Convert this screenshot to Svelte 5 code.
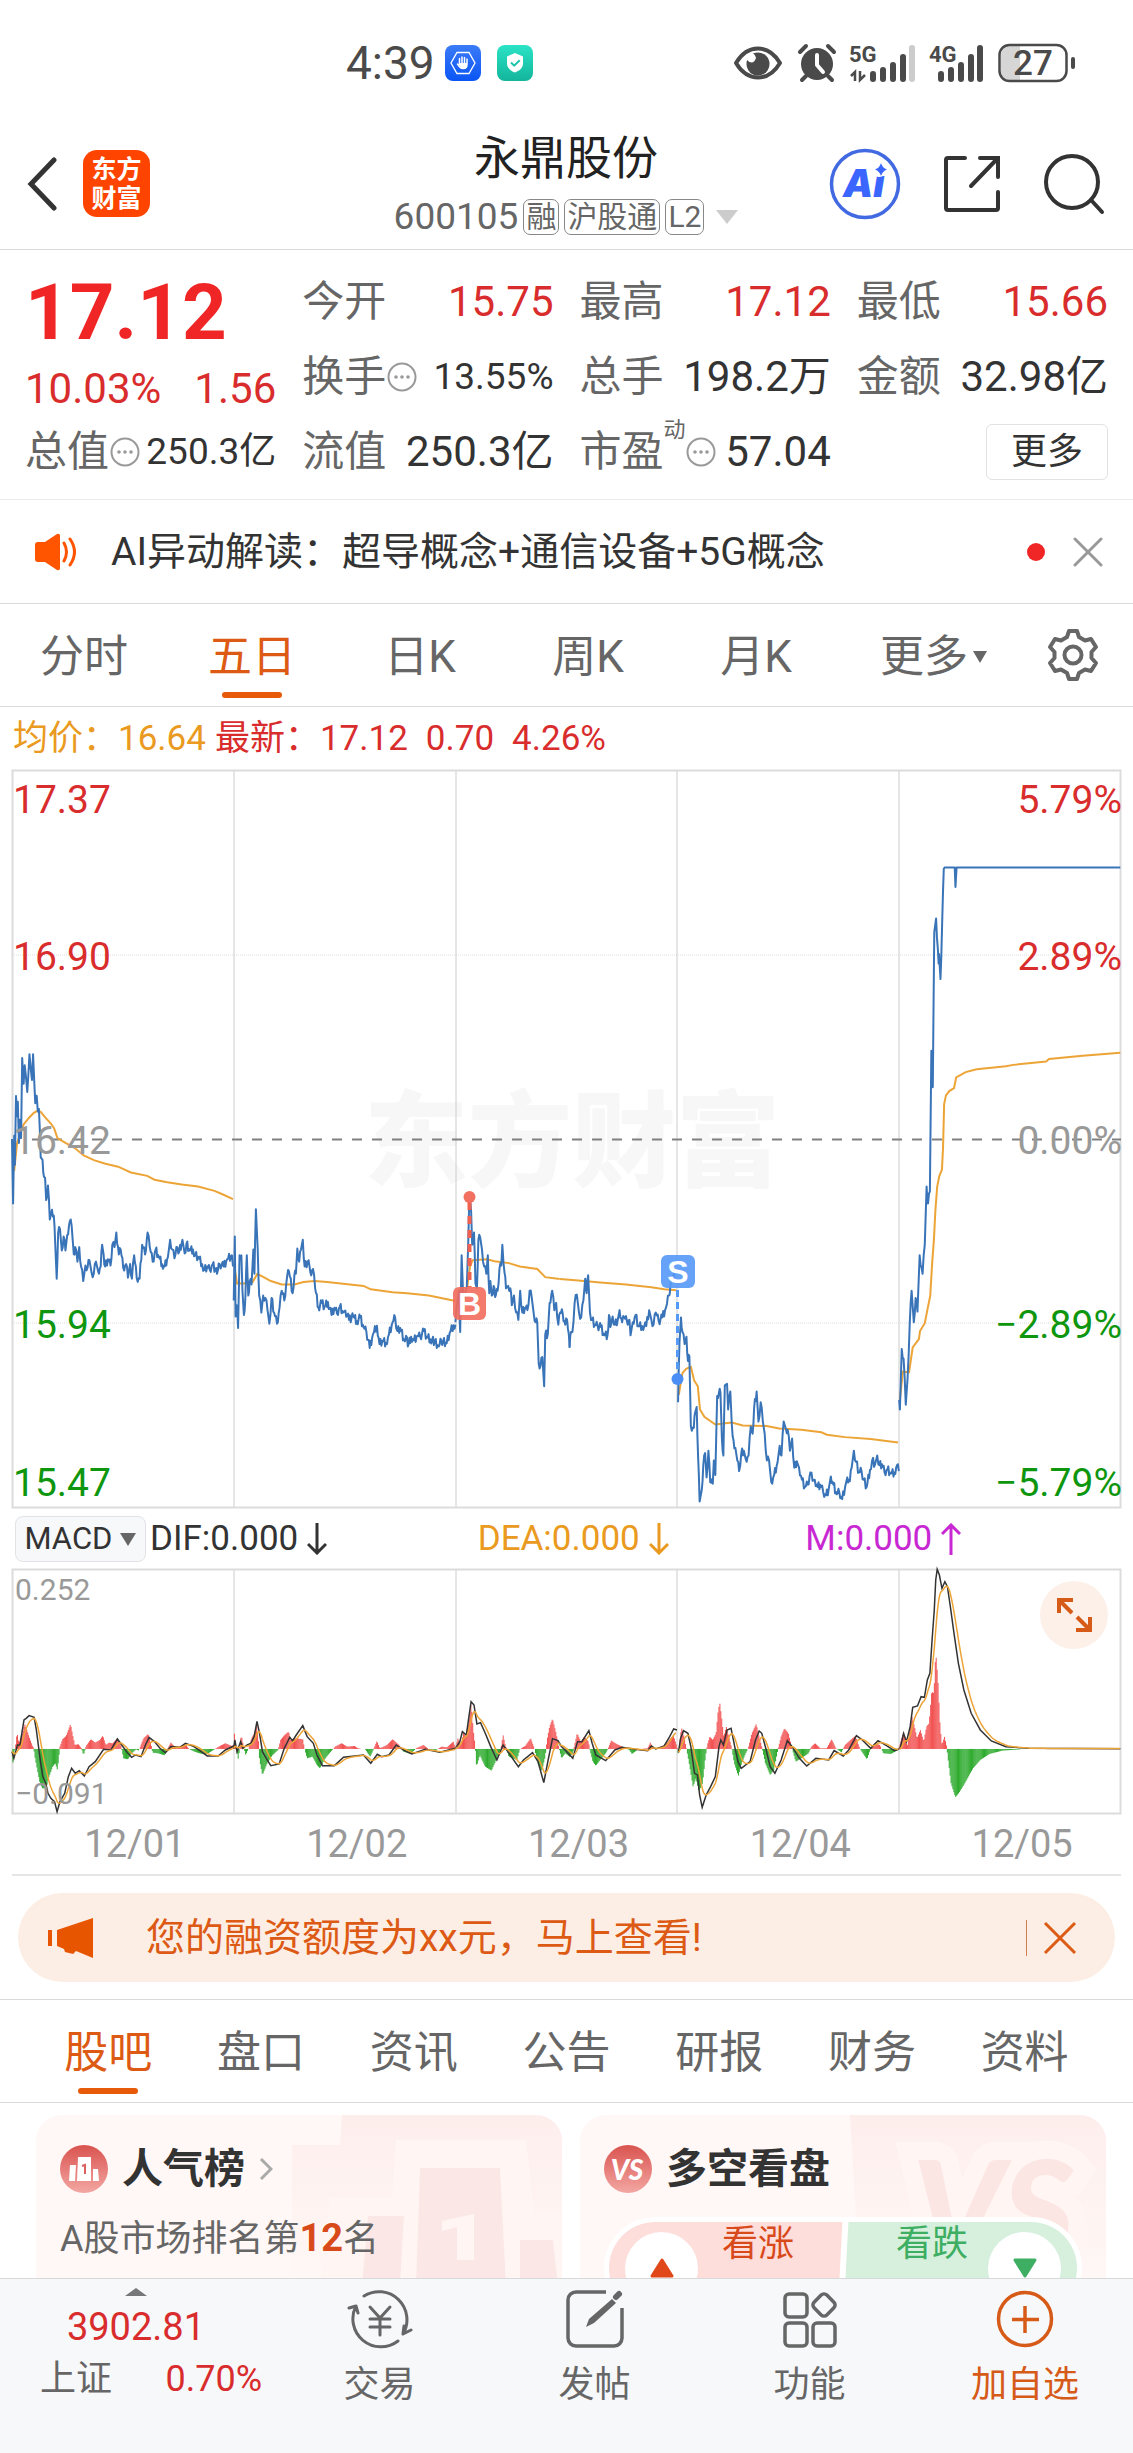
<script lang="ts">
	type Point = [number, number];

	const periods = ['分时', '五日', '日K', '周K', '月K'];
	const sections = ['股吧', '盘口', '资讯', '公告', '研报', '财务', '资料'];
	const dates = ['12/01', '12/02', '12/03', '12/04', '12/05'];
	const gridX = [222, 444, 665, 887];

	let period = $state('五日');
	let section = $state('股吧');

	const priceLabels = [
		{ y: 43, price: '17.37', pct: '5.79%', tone: 'up' },
		{ y: 200, price: '16.90', pct: '2.89%', tone: 'up' },
		{ y: 384, price: '16.42', pct: '0.00%', tone: 'flat' },
		{ y: 568, price: '15.94', pct: '−2.89%', tone: 'down' },
		{ y: 726, price: '15.47', pct: '−5.79%', tone: 'down' }
	];

	const indicators = [
		{ text: 'DIF:0.000', up: false, cls: 'dif' },
		{ text: 'DEA:0.000', up: false, cls: 'dea' },
		{ text: 'M:0.000', up: true, cls: 'macd' }
	];

	// one minute on the x axis and one 0.01 tick on the y axis, in series units
	const MINUTE = 2.54;
	const TICK = 8;

	const parse = (s: string): Point[] => s.trim().split(/\s+/).map((p) => p.split(',').map(Number) as Point);

	function sample(points: Point[], step = MINUTE): Point[] {
		const out: Point[] = [];
		let i = 0;
		for (let x = points[0][0]; x <= points[points.length - 1][0]; x += step) {
			while (i < points.length - 2 && points[i + 1][0] < x) i++;
			const [x0, y0] = points[i];
			const [x1, y1] = points[i + 1];
			out.push([x, y0 + ((y1 - y0) * (x - x0)) / (x1 - x0)]);
		}
		return out;
	}

	// turning points, with tick-sized noise on the minutes between them
	function pricePath(s: string): string {
		const pts = parse(s);
		const out: Point[] = [pts[0]];
		for (let i = 1; i < pts.length; i++) {
			const [x0, y0] = pts[i - 1];
			const [x1, y1] = pts[i];
			const n = Math.round((x1 - x0) / MINUTE);
			if (n < 8) {
				for (let k = 1; k < n; k++) {
					const noise = (((i * 7 + k * 5) % 3) - 1) * TICK;
					out.push([x0 + ((x1 - x0) * k) / n, y0 + ((y1 - y0) * k) / n + noise]);
				}
			}
			out.push([x1, y1]);
		}
		return line(out);
	}

	function line(pts: Point[]): string {
		return 'M' + pts.map(([x, y]) => `${x.toFixed(1)},${y.toFixed(1)}`).join('L');
	}

	function smoothed(s: string): string {
		let ema = NaN;
		return line(sample(parse(s)).map(([x, y]) => {
			ema = Number.isNaN(ema) ? y : ema + (y - ema) * 0.2;
			return [x, ema];
		}));
	}

	function bars(s: string, positive: boolean): string {
		return sample(parse(s))
			.filter(([, y]) => (positive ? y < 746 : y > 748))
			.map(([x, y]) => `M${x.toFixed(1)},747V${y.toFixed(1)}`)
			.join('');
	}

	const price = [
		[
			'33,782 36,915 39,775 41,835 44,693 47,735 49,705 52,790 55,742 58,780 61,615 65,668 68,630 71,650 75,685 78,650 81,607 85,640 88,660 91,607 94,660 97,708 101,693 104,725 107,720 112,820 117,825 121,860 124,862 127,908 132,878 137,948 143,928 148,940 152,1000 156,1070 160,975 165,968 170,1012 175,983 180,1012 185,980 192,952 197,960 203,1020 207,1005 213,1035 218,1005 223,1045 229,1075 235,1043 241,1047 246,1032 252,1058 258,1060 264,1035 270,1055 277,1045 281,1000 285,1020 289,1045 297,1030 304,1043 309,1000 315,1005 320,975 327,1020 332,1010 339,1048 347,1040 352,1068 358,1040 363,1070 369,1022 376,1068 384,1070 391,1000 399,1020 406,975 412,1005 420,1035 428,1010 437,1025 446,1040 453,1045 462,1025 468,990 474,1010 480,1028 488,1005 493,1015 502,990 508,1018 513,998 522,1012 531,1010 537,1022 545,1025 556,1040 562,1052 570,1045 577,1052 585,1040 597,1060 604,1040 615,1045 625,1030 638,1022 641,1045',
			'643,1115 646,983 648,1148 651,1125 655,1172 659,1022 664,1022 667,1095 671,1145 675,1110 679,1022 683,1105 687,1075 692,1082 697,1010 700,1060 704,927 709,1010 713,1105 719,1140 724,1105 730,1110 736,1135 741,1163 747,1110 754,1140 762,1163 769,1130 775,1095 782,1115 790,1065 795,1055 805,1100 810,1062 814,1060 818,1008 823,1035 828,1010 833,990 838,1045 849,1032 854,1058 861,1050 867,1090 876,1130 885,1120 893,1128 902,1118 912,1145 920,1130 927,1142 935,1127 944,1140 950,1136 960,1155 972,1148 982,1158 991,1150 1000,1170 1008,1180 1017,1213 1026,1185 1037,1167 1044,1205 1052,1198 1062,1203 1070,1185 1080,1160 1087,1150 1093,1178 1101,1172 1111,1195 1117,1188 1122,1210 1131,1190 1139,1197 1148,1188 1156,1190 1166,1178 1174,1190 1184,1195 1196,1200 1207,1210 1214,1198 1229,1203 1237,1182 1248,1166 1253,1165',
			'1253,1160 1258,1120 1262,1095 1266,1180 1270,1022 1274,1100 1279,1110 1284,1090 1288,1000 1291,905 1296,930 1299,1000 1304,975 1308,1080 1312,1090 1316,990 1321,985 1326,1010 1332,1045 1338,1060 1342,1022 1346,1100 1349,1075 1353,1105 1358,1085 1362,1108 1369,1095 1374,1050 1379,1043 1382,1000 1388,1058 1392,1090 1398,1085 1404,1090 1408,1125 1414,1105 1420,1140 1426,1155 1431,1095 1437,1140 1444,1130 1451,1135 1457,1095 1463,1110 1468,1140 1474,1160 1478,1160 1482,1245 1487,1250 1492,1232 1497,1292 1500,1185 1507,1185 1512,1120 1519,1095 1525,1135 1530,1120 1536,1165 1541,1140 1548,1142 1555,1165 1560,1155 1567,1210'
		],
		[
			'26,1213 30,1180 34,1180 40,1120 46,1103 52,1140 58,1150 64,1115 69,1070 73,1100 77,1063 82,1140 88,1155 95,1165 103,1168 112,1170 121,1187 130,1187 134,1145 138,1170 144,1148 150,1165 158,1155 163,1135 170,1160 176,1150 183,1158 190,1155 193,1187 199,1160 207,1145 214,1168 225,1168 236,1168 244,1135 250,1155 256,1165 262,1140 270,1158 280,1150 290,1130 298,1105 302,1085 307,1065 314,1068',
			'323,1325 327,1200 331,1150 335,1180 341,1205 346,1190 350,1240 354,1230 358,1375 366,1378 370,1345 374,1335 378,1440 382,1530 388,1505 392,1455 397,1430 401,1480 406,1425 411,1490 418,1493 421,1445 425,1475 430,1312 435,1305 439,1305 443,1400 447,1435 451,1290 457,1287 460,1340 466,1303 470,1370 477,1420 483,1435 490,1467 496,1430 503,1425 508,1442 516,1435 522,1375 527,1390 531,1338 538,1303 543,1365 549,1325 555,1365 560,1390 566,1445 572,1445 578,1490 586,1475 595,1450 601,1415 606,1435 612,1365 618,1380 623,1382 629,1425 635,1400 641,1460 648,1447 654,1460 662,1485 670,1500 678,1495 685,1470 691,1487 697,1485 705,1500 712,1495 720,1510 728,1517 735,1505 741,1478 748,1495 757,1515 764,1510 772,1525 780,1500 786,1480 793,1488 798,1460 804,1425 810,1448 818,1470 825,1467 831,1485 839,1500 848,1465 854,1445 862,1453 868,1435 874,1455 881,1453 888,1470 896,1463 905,1472 915,1470 922,1455 927,1467',
			'928,1320 930,1340 935,1215 940,1235 946,1330 951,1275 957,1160 962,1095 968,1160 973,1110 978,1138 984,1022 992,1060 998,1000 1003,880 1007,915 1012,890 1016,600 1020,675 1024,355 1029,327 1036,420 1037,400 1041,452 1050,225 1052,222 1080,222 1082,262 1085,222 1533,222'
		]
	];

	const average = [
		[
			'39,848 47,790 56,770 65,752 80,738 93,728 103,724 112,726 125,738 140,750 149,760 158,780 180,790 205,800 230,816 260,826 290,833 325,839 360,851 405,858 425,866 460,871 500,876 545,880 590,889 615,897 641,906',
			'645,1045 652,1080 670,1080 695,1077 708,1060 725,1067 745,1075 775,1082 810,1082 835,1077 865,1075 900,1077 1000,1085 1020,1092 1080,1098 1120,1100 1180,1105 1253,1116',
			'1285,1090 1293,1045 1300,1032 1340,1030 1360,1034 1400,1038 1430,1045 1478,1050 1500,1067 1540,1071'
		],
		[
			'0,1071 50,1074 110,1078 180,1082 250,1088 285,1092 318,1094',
			'325,1310 335,1265 345,1256 358,1252 367,1280 377,1292 383,1340 395,1355 425,1371 470,1367 500,1373 565,1374 600,1379 660,1382 715,1387 730,1392 780,1397 850,1401 925,1408',
			'930,1320 938,1262 955,1263 965,1212 982,1195 985,1178 998,1162 1005,1135 1013,1105 1018,1040 1023,990 1027,930 1032,880 1038,858 1045,845 1048,800 1051,710 1056,692 1065,683 1078,677 1084,655 1110,644 1140,638 1220,632 1240,629 1330,622 1338,617 1430,610 1533,604'
		]
	];

	const dif = [
		[
			'33,755 38,775 42,760 48,735 55,735 60,700 66,660 72,655 80,647 94,652 100,690 106,740 112,790 118,830 126,850 132,880 140,895 150,905 157,935 165,905 178,880 188,830 197,805 207,820 218,812 232,828 245,800 262,785 285,748 305,750 323,717 335,735 348,755 362,772 373,765 388,770 400,735 410,712 425,725 440,745 455,758 470,740 495,742 510,730 530,738 545,748 570,768 600,768 620,750 643,738',
			'643,745 646,720 652,755 662,725 668,745 680,735 690,730 699,710 707,664 714,700 722,755 735,780 745,797 768,792 782,745 797,712 805,722 815,705 833,677 845,710 862,730 872,765 887,797 920,797 945,772 1000,765 1020,790 1038,763 1050,770 1070,765 1090,735 1110,750 1133,762 1170,748 1210,757 1253,745',
			'1253,745 1265,725 1272,695 1283,705 1290,650 1296,605 1304,615 1312,672 1322,668 1335,700 1350,740 1367,780 1384,735 1395,752 1426,800 1440,780 1465,758 1480,785 1496,848 1508,780 1520,716 1535,722 1542,735'
		],
		[
			'0,735 18,755 35,775 48,725 60,725 79,692 88,730 98,765 125,782 150,750 170,742 205,748 240,752 250,738 262,747 285,738 300,710 311,687 320,690',
			'324,757 330,715 338,692 350,700 358,740 368,820 376,825 382,885 389,922 400,885 412,860 425,830 435,740 440,720 447,735 457,690 468,685 478,740 487,785 496,805 520,785 535,720 545,693 552,700 563,745 575,800 588,820 605,780 622,722 635,740 655,775 675,798 700,775 735,780 750,752 775,768 790,750 811,707 825,718 850,745 870,722 890,735 915,752 928,747',
			'930,747 940,700 948,725 958,680 965,622 978,618 988,590 997,592 1005,540 1012,520 1018,420 1024,330 1028,240 1032,208 1038,225 1045,265 1053,245 1060,260 1068,320 1078,400 1090,490 1105,570 1125,640 1150,690 1180,723 1220,740 1280,745 1533,746'
		]
	];

	const histogram = [
		'33,747 36,795 40,755 43,735 47,697 52,730 56,715 62,700 68,672 74,690 80,710 88,735 93,745 95,765 102,805 110,850 117,865 127,865 135,830 145,800 152,790 158,810 162,770 165,740 172,718 182,708 188,690 194,672 200,705 206,735 216,733 224,745 230,765 237,738 250,718 262,728 275,720 283,707 291,735 300,728 310,730 323,715 333,738 340,775 352,778 362,760 375,748 382,752 388,735 395,715 408,702 416,735 420,758 435,760 453,766 462,745 470,728 485,745 497,738 510,733 520,747 535,755 555,762 570,762 590,748 605,738 620,730 638,738 643,735 645,700 650,745 656,780 660,735 664,705 670,740 676,765 684,745 692,715 700,700 706,672 711,720 714,780 722,825 735,790 750,765 765,750 772,720 783,705 794,695 800,720 815,715 833,718 838,747 845,775 860,770 872,795 880,805 895,775 910,755 922,740 940,730 955,740 975,738 985,745 1005,748 1018,770 1025,755 1037,723 1045,745 1065,735 1080,718 1098,735 1110,755 1130,762 1145,745 1165,735 1180,748 1200,750 1215,740 1230,742 1247,725 1253,745 1260,715 1268,735 1275,700 1282,710 1290,660 1296,610 1302,690 1307,735 1311,800 1320,765 1335,800 1352,812 1365,780 1378,745 1384,705 1390,735 1400,770 1422,780 1430,748 1445,738 1460,715 1470,745 1480,790 1490,815 1500,770 1505,720 1512,680 1520,656 1530,700 1538,745 1545,775 1555,760 1567,770',
		'26,770 35,760 40,735 47,700 57,725 66,710 78,725 82,750 90,785 98,797 110,780 125,760 132,745 140,722 155,732 170,740 190,750 197,762 215,747 240,745 247,728 255,745 275,745 295,725 310,705 320,740 324,765 330,700 334,683 340,715 346,745 355,800 364,860 372,835 380,875 390,850 398,770 403,735 410,710 418,720 427,700 432,640 437,607 443,660 448,710 455,680 463,715 470,745 477,790 488,828 497,790 508,760 515,745 525,700 537,672 545,710 552,740 562,790 575,825 585,810 597,745 605,710 614,685 625,700 635,745 645,785 660,775 680,760 688,740 698,730 712,745 730,745 743,718 755,745 770,757 780,735 795,720 808,708 820,745 840,778 850,745 862,730 875,735 885,760 905,762 925,750 930,735 940,695 950,740 955,700 963,650 970,680 977,715 986,690 995,725 1003,680 1010,670 1017,575 1023,580 1028,455 1034,540 1040,680 1045,735 1052,710 1058,740 1061,770 1070,850 1082,892 1092,878 1110,845 1130,805 1150,780 1175,762 1210,752 1260,748 1533,747'
	];

	const priceHalves = ['translate(-12 -10) scale(.3635 .4847)', 'translate(548 -10) scale(.3655 .4847)'];
	const macdHalves = ['translate(-12 -69) scale(.3635 .3333)', 'translate(548 -69) scale(.3655 .3333)'];
</script>

{#snippet more()}
	<svg class="hint" viewBox="0 0 30 30" aria-hidden="true">
		<circle cx="15" cy="15" r="13.5" fill="none" stroke="#999" stroke-width="2" />
		<circle cx="9" cy="15" r="1.8" fill="#999" /><circle cx="15" cy="15" r="1.8" fill="#999" /><circle cx="21" cy="15" r="1.8" fill="#999" />
	</svg>
{/snippet}

<div class="app">
	<div class="status">
		<div class="status-left">
			<span class="clock">4:39</span>
			<svg width="36" height="36" viewBox="0 0 36 36">
				<defs><linearGradient id="blue" x2="0" y2="1"><stop stop-color="#3b7bf6" /><stop offset="1" stop-color="#0a55f5" /></linearGradient></defs>
				<rect width="36" height="36" rx="8" fill="url(#blue)" />
				<path d="M12 7.500h12l6 10.500-6 10.500H12L6 18z" fill="none" stroke="#fff" stroke-width="1.300" />
				<path d="M14.500 13.500v6M17 12v7M19.500 12.500v7M22 14v6M22 19.500c0 3-1.500 4-4 4s-3.500-1.500-5.500-4.500" fill="none" stroke="#fff" stroke-width="1.500" stroke-linecap="round" />
				<path d="M14 18h8v4l-2 2h-4z" fill="#fff" />
			</svg>
			<svg class="shield" width="36" height="36" viewBox="0 0 36 36">
				<defs><linearGradient id="teal" x2="0" y2="1"><stop stop-color="#2be3c6" /><stop offset="1" stop-color="#13b59b" /></linearGradient></defs>
				<rect width="36" height="36" rx="8" fill="url(#teal)" />
				<path d="M18 8l8 3.500v7c0 4.500-4 7.500-8 9-4-1.500-8-4.500-8-9v-7z" fill="#fff" />
				<path d="M14 17.500l3.200 3.200 5.500-5.500" fill="none" stroke="#1fc5aa" stroke-width="2" />
			</svg>
		</div>
		<div class="status-right">
			<svg width="48" height="36" viewBox="0 0 48 36">
				<path d="M2 18C8 8 16 3.500 24 3.500S40 8 46 18C40 28 32 32.500 24 32.500S8 28 2 18z" fill="none" stroke="#4a4a4a" stroke-width="4" stroke-linejoin="round" />
				<circle cx="24" cy="19" r="11.500" fill="#4a4a4a" /><path d="M13 15q6 6 9-2-1-4-4-5l-6 4z" fill="#fff" />
			</svg>
			<svg class="alarm" width="38" height="38" viewBox="0 0 38 38">
				<circle cx="19" cy="20" r="16" fill="#4a4a4a" />
				<path d="M2 8l6-6M36 8l-6-6M8 32l-4 4M30 32l4 4" stroke="#4a4a4a" stroke-width="4" stroke-linecap="round" />
				<path d="M19 11v10l6 7" fill="none" stroke="#fff" stroke-width="4" stroke-linecap="round" stroke-linejoin="round" />
			</svg>
			<svg width="66" height="38" viewBox="0 0 66 38">
				<text x="-1" y="18" class="net">5G</text>
				<path d="M5 37V28l-4 4M10 27v9l5-5" fill="none" stroke="#4a4a4a" stroke-width="2.500" />
				<path d="M23 30v5M33 26v9M43 21v14M53 13v22" stroke="#4a4a4a" stroke-width="6" stroke-linecap="round" />
				<path d="M62 4v31" stroke="#ccc" stroke-width="6" stroke-linecap="round" />
			</svg>
			<svg class="sim" width="54" height="38" viewBox="0 0 54 38">
				<text x="-1" y="18" class="net">4G</text>
				<path d="M11 30v5M21 26v9M31 21v14M41 13v22M50 4v31" stroke="#4a4a4a" stroke-width="6" stroke-linecap="round" />
			</svg>
			<svg class="battery" width="78" height="40" viewBox="0 0 78 40">
				<path d="M3 12a9 9 0 0 1 9-9h10v34H12a9 9 0 0 1-9-9z" fill="#d6d6d6" />
				<rect x="1.500" y="2" width="67" height="36" rx="10" fill="none" stroke="#4a4a4a" stroke-width="2.500" />
				<path d="M75 16v8" stroke="#4a4a4a" stroke-width="4" stroke-linecap="round" />
				<text x="35" y="32" class="charge">27</text>
			</svg>
		</div>
	</div>

	<header>
		<div class="head-left">
			<button class="icon" aria-label="返回">
				<svg width="30" height="54" viewBox="0 0 30 54"><path d="M27 3L4 27l23 24" fill="none" stroke="#333" stroke-width="5" stroke-linecap="round" /></svg>
			</button>
			<a class="logo" href="#home"><span>东方</span><span>财富</span></a>
		</div>
		<div class="title">
			<h1>永鼎股份</h1>
			<div class="code">
				<span>600105</span>
				<span class="tag">融</span><span class="tag">沪股通</span><span class="tag">L2</span>
				<svg width="22" height="14" viewBox="0 0 22 14"><path d="M0 0h22L11 14z" fill="#ccc" /></svg>
			</div>
		</div>
		<div class="head-right">
			<button class="icon" aria-label="AI">
				<svg width="72" height="72" viewBox="0 0 72 72">
					<circle cx="36" cy="36" r="33.500" fill="none" stroke="#4169e1" stroke-width="3.500" />
					<text x="14" y="49" class="ai">Ai</text>
					<circle cx="50" cy="21" r="8" fill="#fff" />
					<path d="M52 15q1.500 5 6 6.500-4.500 1.500-6 6.500-1.500-5-6-6.500 4.500-1.500 6-6.500z" fill="#3a66ff" />
				</svg>
			</button>
			<button class="icon" aria-label="分享">
				<svg width="58" height="58" viewBox="0 0 58 58" fill="none" stroke="#333" stroke-width="4" stroke-linecap="round">
					<path d="M22 3H5a2 2 0 0 0-2 2v48a2 2 0 0 0 2 2h48a2 2 0 0 0 2-2V37M37 3h18v19M54 4L28 31" />
				</svg>
			</button>
			<button class="icon" aria-label="搜索">
				<svg width="62" height="62" viewBox="0 0 62 62" fill="none" stroke="#333" stroke-width="4" stroke-linecap="round"><circle cx="29" cy="29" r="26" /><path d="M48 47l11 12" /></svg>
			</button>
		</div>
	</header>

	<main>
		<section class="quote">
			<div class="last">
				<strong>17.12</strong>
				<div class="change"><span>10.03%</span><span>1.56</span></div>
			</div>
			<div class="cell"><span>今开</span><b class="up">15.75</b></div>
			<div class="cell"><span>最高</span><b class="up">17.12</b></div>
			<div class="cell"><span>最低</span><b class="up">15.66</b></div>
			<div class="cell"><span>换手</span>{@render more()}<b class="small">13.55%</b></div>
			<div class="cell"><span>总手</span><b>198.2万</b></div>
			<div class="cell"><span>金额</span><b>32.98亿</b></div>
			<div class="cell"><span>总值</span>{@render more()}<b class="small">250.3亿</b></div>
			<div class="cell"><span>流值</span><b>250.3亿</b></div>
			<div class="cell"><span>市盈</span><sup>动</sup>{@render more()}<b>57.04</b></div>
			<div class="cell end"><button class="more">更多</button></div>
		</section>

		<section class="news">
			<svg width="46" height="38" viewBox="0 0 46 38">
				<path d="M2 12q0-3 3-3h7L24 1q3-1 3 2v32q0 3-3 2L12 29H5q-3 0-3-3z" fill="#ff5500" />
				<path d="M31 10q5 9 0 18M37 6q9 13 0 26" fill="none" stroke="#ff5500" stroke-width="3" stroke-linecap="round" />
			</svg>
			<a href="#news">AI异动解读：超导概念+通信设备+5G概念</a>
			<i class="dot"></i>
			<button class="icon" aria-label="关闭">
				<svg width="30" height="30" viewBox="0 0 30 30"><path d="M2 2l26 26M28 2L2 28" stroke="#999" stroke-width="3" stroke-linecap="round" /></svg>
			</button>
		</section>

		<nav class="periods">
			{#each periods as p}
				<button class="tab" class:active={p === period} onclick={() => (period = p)}>{p}</button>
			{/each}
			<button class="tab">更多<svg width="16" height="14" viewBox="0 0 16 14"><path d="M1 1h14L8 13z" fill="#666" /></svg></button>
			<button class="icon gear" aria-label="设置">
				<svg width="52" height="54" viewBox="0 0 52 54" fill="none" stroke="#666" stroke-width="4" stroke-linejoin="round">
					<path d="M22 3h8l2 6 6 3.500 6-1.500 5 8-4.500 5v6l4.500 5-5 8-6-1.500L32 45l-2 6h-8l-2-6-6-3.500L8 43l-5-8 4.500-5v-6L3 19l5-8 6 1.500L20 9z" />
					<circle cx="26" cy="27" r="8.500" />
				</svg>
			</button>
		</nav>

		<div class="legend">
			<span class="avg">均价：16.64</span>
			<span class="now"><span>最新：17.12</span><span>0.70</span><span>4.26%</span></span>
		</div>

		<section class="charts">
			<svg class="chart" viewBox="0 0 1109 738">
				<text x="560" y="409" class="watermark">东方财富</text>
				<path d="M0 185H1109M0 553H1109" stroke="#ddd" stroke-dasharray="1 1" />
				{#each gridX as x}<path d="M{x} 0V737" stroke="#ccc" />{/each}
				<rect x="0.500" y="0.500" width="1108" height="737" fill="none" stroke="#dcdcdc" stroke-width="2" />
				<path d="M20 369.500H1109" stroke="#808080" stroke-width="2" stroke-dasharray="10 10" />
				{#each priceHalves as transform, h}
					<g {transform} fill="none">
						{#each average[h] as s}<path d={line(parse(s))} stroke="#eda437" stroke-width="2" vector-effect="non-scaling-stroke" />{/each}
						{#each price[h] as s}<path d={pricePath(s)} stroke="#3a74b8" stroke-width="2" stroke-linejoin="round" vector-effect="non-scaling-stroke" />{/each}
					</g>
				{/each}
				<path d="M457.500 432V517" stroke="#f2604f" stroke-width="4" stroke-dasharray="8 6" />
				<circle cx="457.500" cy="427" r="6" fill="#f2705f" />
				<g opacity="0.9">
					<rect x="441" y="517" width="33" height="33" rx="6" fill="#f26b5c" />
					<rect x="649" y="485" width="34" height="33" rx="6" fill="#5599f7" />
				</g>
				<text x="457.500" y="545" class="badge">B</text>
				<text x="666" y="513" class="badge">S</text>
				<path d="M665.500 520V604" stroke="#5599f7" stroke-width="3" stroke-dasharray="7 5" />
				<circle cx="665.500" cy="609" r="6" fill="#4a8ef5" />
				{#each priceLabels as l}
					<text x="1" y={l.y} class="axis {l.tone}">{l.price}</text>
					<text x="1110" y={l.y} class="axis right {l.tone}">{l.pct}</text>
				{/each}
			</svg>

			<div class="indicator">
				<button class="pick">MACD<svg width="16" height="14" viewBox="0 0 16 14"><path d="M0 1h16L8 14z" fill="#666" /></svg></button>
				{#each indicators as ind}
					<span class="value {ind.cls}">{ind.text}
						<svg width="20" height="32" viewBox="0 0 20 32" fill="none" stroke="currentColor" stroke-width="3">
							<path d={ind.up ? 'M10 32V2M1 11l9-9 9 9' : 'M10 0v30M1 21l9 9 9-9'} />
						</svg>
					</span>
				{/each}
			</div>

			<svg class="chart" viewBox="0 0 1109 245">
				{#each gridX as x}<path d="M{x} 0V245" stroke="#ccc" />{/each}
				<rect x="0.500" y="0.500" width="1108" height="244" fill="none" stroke="#dcdcdc" stroke-width="2" />
				{#each macdHalves as transform, h}
					<g {transform} fill="none">
						<path d={bars(histogram[h], true)} stroke="#f03c3c" stroke-width="2.540" />
						<path d={bars(histogram[h], false)} stroke="#14a014" stroke-width="2.540" />
					</g>
					<g {transform} fill="none" stroke-width="1.500">
						{#each dif[h] as s}
							<path d={line(parse(s))} stroke="#333" vector-effect="non-scaling-stroke" />
							<path d={smoothed(s)} stroke="#eda437" vector-effect="non-scaling-stroke" />
						{/each}
					</g>
				{/each}
				<text x="3" y="31" class="scale">0.252</text>
				<text x="3" y="235" class="scale">−0.091</text>
				<circle cx="1062" cy="46" r="34" fill="#fdf0e9" />
				<path d="M1047 44V31h14M1048 32l12 12M1078 48v13h-14M1077 60l-12-12" fill="none" stroke="#d65a18" stroke-width="4" />
			</svg>
		</section>

		<div class="dates">{#each dates as d}<span>{d}</span>{/each}</div>
		<hr />

		<div class="promo">
			<svg width="46" height="40" viewBox="0 0 46 40"><path d="M0 12h4v16H0zM9 12L45 0v40l-17-7-3 3-8-2-1-3-7-3z" fill="#e85500" /></svg>
			<a href="#margin">您的融资额度为xx元，马上查看!</a>
			<i class="bar"></i>
			<button class="icon" aria-label="关闭">
				<svg width="34" height="34" viewBox="0 0 34 34"><path d="M2 2l30 30M32 2L2 32" stroke="#dd5a14" stroke-width="3" /></svg>
			</button>
		</div>

		<nav class="sections">
			{#each sections as s}
				<button class="tab" class:active={s === section} onclick={() => (section = s)}>{s}</button>
			{/each}
		</nav>

		<section class="cards">
			<article class="card">
				<svg class="art" viewBox="0 0 270 170" aria-hidden="true">
					<defs><linearGradient id="fade" x2="0" y2="1"><stop stop-color="#fdeeec" /><stop offset="1" stop-color="#fff8f6" /></linearGradient></defs>
					<path d="M50 0H270V170H0V30H48z" fill="url(#fade)" />
					<path d="M104 25H234L242 98H270V170H28L38 82H100z" fill="#fff6f4" />
					<path d="M128 53H208L214 170H124zM76 101H112L108 170H70zM228 125H261L266 170H228z" fill="#fbe8e6" />
					<path d="M150 106l32-7v46h-17v-33l-15 4z" fill="#fff6f4" />
				</svg>
				<h2>
					<svg width="48" height="48" viewBox="0 0 48 48">
						<defs><linearGradient id="red" x2="0" y2="1"><stop stop-color="#d9534f" /><stop offset="1" stop-color="#f3a7a3" /></linearGradient></defs>
						<circle cx="24" cy="24" r="24" fill="url(#red)" />
						<path d="M18 12h13v24H17zM10 20h6l-1 16H9zM33 24h5l1 12h-6z" fill="#fff" /><path d="M22 21l3-1v9" fill="none" stroke="#d9605c" stroke-width="2" />
					</svg>
					人气榜
					<svg class="chev" width="14" height="24" viewBox="0 0 14 24"><path d="M2 2l10 10L2 22" fill="none" stroke="#aaa" stroke-width="3" /></svg>
				</h2>
				<p>A股市场排名第<b>12</b>名</p>
				<p>总市值排名第<b>9</b>名</p>
			</article>
			<article class="card">
				<svg class="art" viewBox="0 0 270 170" aria-hidden="true">
					<path d="M14 0H270V170H24z" fill="url(#fade)" />
					<text x="76" y="146" class="art-vs">VS</text>
				</svg>
				<h2>
					<svg width="48" height="48" viewBox="0 0 48 48"><circle cx="24" cy="24" r="24" fill="url(#red)" /><text x="23" y="35" class="vs">VS</text></svg>
					多空看盘
				</h2>
				<div class="vote">
					<button class="bull">
						<span class="knob"><svg width="24" height="20" viewBox="0 0 24 20"><path d="M12 2l10 16H2z" fill="#e0481a" stroke="#e0481a" stroke-width="3" stroke-linejoin="round" /></svg></span>
						<span>看涨<br />**%</span>
					</button>
					<button class="bear">
						<span>看跌<br />**%</span>
						<span class="knob"><svg width="24" height="20" viewBox="0 0 24 20"><path d="M12 18L2 2h20z" fill="#3dae62" stroke="#3dae62" stroke-width="3" stroke-linejoin="round" /></svg></span>
					</button>
				</div>
			</article>
		</section>
	</main>

	<footer>
		<a class="index" href="#index">
			<svg width="22" height="8" viewBox="0 0 22 8"><path d="M0 8L11 0l11 8z" fill="#777" /></svg>
			<span class="points">3902.81</span>
			<span class="row"><span>上证</span><span class="up">0.70%</span></span>
		</a>
		<button class="action">
			<svg width="66" height="60" viewBox="0 0 66 60" fill="none" stroke="#666" stroke-width="3" stroke-linecap="round">
				<path d="M17 7a28 28 0 0 1 39 38M56 45l1-8M56 45l8-4M51 52A28 28 0 0 1 9 17M9 17l-7 2M9 17l2 7" /><path d="M23 18l10 11 10-11M33 29v17M23 30h20M23 38h20" />
			</svg>
			交易
		</button>
		<button class="action">
			<svg width="58" height="60" viewBox="0 0 58 60" fill="none" stroke="#666" stroke-width="3.500">
				<path d="M40 3H10a8 8 0 0 0-8 8v38a8 8 0 0 0 8 8h38a8 8 0 0 0 8-8V19" />
				<path d="M20 38l3-8L46 10l4 4-22 20z" fill="#666" stroke="none" /><path d="M50 8l3-3" stroke-width="6" stroke-linecap="round" />
			</svg>
			发帖
		</button>
		<button class="action">
			<svg width="54" height="60" viewBox="0 0 54 60" fill="none" stroke="#666" stroke-width="3.500">
				<rect x="2" y="5" width="22" height="23" rx="4" /><rect x="2" y="34" width="22" height="23" rx="4" /><rect x="30" y="34" width="22" height="23" rx="4" />
				<rect x="32" y="7" width="18" height="18" rx="4" transform="rotate(45 41 16)" />
			</svg>
			功能
		</button>
		<button class="action add">
			<svg width="58" height="60" viewBox="0 0 58 60" fill="none" stroke="#d65a18" stroke-width="3.500"><circle cx="29" cy="30" r="26.500" /><path d="M29 17v27M16 30.500h27" /></svg>
			加自选
		</button>
	</footer>
</div>

<style>
	:global(body) { margin: 0; background: #fff; }
	.app {
		display: flex; flex-direction: column; height: 100vh;
		font-family: 'Roboto', 'Noto Sans CJK SC', sans-serif; color: #333;
	}
	button { font: inherit; color: inherit; background: none; border: 0; padding: 0; cursor: pointer; }
	a { color: inherit; text-decoration: none; }
	svg { display: block; flex: none; }
	.icon { display: flex; }
	.up { color: #d92c2c; fill: #d92c2c; }
	.down { fill: #0f960f; }
	.flat { fill: #999; }

	.status { display: flex; justify-content: space-between; height: 120px; padding: 6px 57px 0 346px; box-sizing: border-box; }
	.status svg { overflow: visible; }
	.status-left, .status-right { display: flex; align-items: center; }
	.clock { font-size: 46px; line-height: 48px; color: #4a4a4a; padding-right: 10px; }
	.shield { margin-left: 16px; }
	.alarm { margin: 0 14px 0 16px; }
	.sim { margin: 0 14px; }
	.net { font-size: 22px; font-weight: 700; fill: #4a4a4a; }
	.charge { font-size: 35px; font-weight: 500; fill: #4a4a4a; text-anchor: middle; }

	header { display: grid; grid-template-columns: 1fr auto 1fr; align-items: center; height: 127px; border-bottom: 1px solid #d9d9d9; padding: 0 28px 2px 27px; }
	.head-left { display: flex; align-items: center; gap: 26px; }
	.logo {
		display: flex; flex-direction: column; justify-content: center; width: 67px; height: 67px;
		border-radius: 14px; background: #ff4400; color: #fff;
		font-size: 25px; line-height: 29px; font-weight: 700; text-align: center;
	}
	.title { text-align: center; padding-top: 4px; }
	h1 { margin: 0; font-size: 46px; line-height: 62px; font-weight: 400; color: #222; }
	.code { display: flex; align-items: center; gap: 5px; font-size: 37px; line-height: 56px; color: #666; }
	.tag { border: 1px solid #888; border-radius: 7px; font-size: 30px; line-height: 34px; padding: 0 2px; }
	.code svg { margin-left: 7px; }
	.head-right { display: flex; align-items: center; justify-content: flex-end; gap: 42px; }
	.ai { font: italic 900 38px 'Inter', sans-serif; fill: #3a66ff; }

	main { flex: 1; min-height: 0; overflow: hidden; }
	.quote {
		display: grid; grid-template-columns: repeat(4, 1fr); grid-auto-rows: 75px; column-gap: 26px;
		padding: 14px 25px 10px; border-bottom: 1px solid #ebebeb;
	}
	.last { grid-row: span 2; color: #f02525; }
	.last strong { display: block; font-size: 78px; line-height: 98px; }
	.change { display: flex; justify-content: space-between; font-size: 42px; line-height: 54px; color: #d92c2c; }
	.cell { display: flex; align-items: center; font-size: 42px; line-height: 60px; color: #666; white-space: nowrap; }
	.cell b { margin-left: auto; font-weight: 400; color: #333; }
	.cell b.up { color: #d92c2c; }
	.cell b.small { font-size: 37px; }
	.cell sup { font-size: 22px; line-height: 32px; align-self: flex-start; }
	.hint { width: 30px; height: 30px; margin-left: 1px; }
	sup + .hint { margin-left: 0; }
	.end { justify-content: flex-end; }
	.more { width: 122px; height: 56px; border: 1px solid #e2e2e2; border-radius: 6px; font-size: 36px; line-height: 52px; color: #333; }

	.news { display: flex; align-items: center; height: 103px; padding: 0 30px 0 33px; border-bottom: 1px solid #d9d9d9; font-size: 39px; line-height: 60px; }
	.news a { margin: 0 auto 0 32px; }
	.dot { width: 18px; height: 18px; border-radius: 50%; background: #f02525; margin-right: 28px; }

	.periods { display: grid; grid-template-columns: 168fr 168fr 168fr 168fr 168fr 188fr 105fr; height: 102px; border-bottom: 1px solid #d9d9d9; }
	.tab { position: relative; display: flex; align-items: center; justify-content: center; gap: 4px; padding-top: 3px; font-size: 44px; line-height: 60px; color: #666; }
	.active { color: #dd5a14; }
	.active::after { content: ''; position: absolute; left: 50%; bottom: 8px; width: 60px; height: 6px; margin-left: -30px; border-radius: 3px; background: #e65a0a; }
	.gear { align-items: center; justify-content: center; padding-right: 16px; }

	.legend { display: flex; gap: 9px; padding: 0 13px; font-size: 35px; line-height: 63px; height: 63px; }
	.avg, .dea { color: #ea9a20; }
	.now { display: flex; gap: 18px; color: #d92c2c; }

	.charts { padding: 0 12px; }
	.chart { width: 100%; overflow: visible; }
	.axis { font-size: 39px; }
	.right { text-anchor: end; }
	.watermark { font-size: 104px; font-weight: 900; fill: #f7f7f7; text-anchor: middle; }
	.badge { font: 700 32px 'Liberation Sans', sans-serif; fill: #fff; text-anchor: middle; }
	.scale { font-size: 30px; fill: #999; }
	.indicator { display: flex; align-items: center; height: 61px; padding-left: 3px; margin-right: -12px; font-size: 35px; line-height: 50px; }
	.pick { display: flex; align-items: center; justify-content: center; gap: 8px; width: 131px; height: 46px; border: 1px solid #e2e3e6; border-radius: 8px; background: #f7f8fa; font-size: 31px; line-height: 42px; margin-right: 4px; }
	.value { flex: 1; display: flex; align-items: center; gap: 9px; }
	.macd { color: #c828d2; }

	.dates { display: grid; grid-template-columns: repeat(5, 1fr); padding-left: 24px; font-size: 38px; line-height: 60px; color: #999; text-align: center; }
	hr { height: 2px; margin: 0 12px; border: 0; background: #e5e5e5; }

	.promo { display: flex; align-items: center; height: 89px; margin: 17px 18px; padding: 0 38px 0 30px; border-radius: 45px; background: #fceee4; color: #dd5a14; font-size: 39px; line-height: 60px; box-sizing: border-box; }
	.promo a { margin: 0 auto 0 52px; }
	.bar { width: 1px; height: 36px; background: #d08050; margin-right: 16px; }

	.sections { display: grid; grid-template-columns: repeat(7, 1fr); height: 102px; padding: 0 32px; border: solid #d9d9d9; border-width: 1px 0; }

	.cards { display: grid; grid-template-columns: 1fr 1fr; gap: 18px; padding: 12px 27px 0 36px; }
	.card { position: relative; height: 300px; padding: 24px; box-sizing: border-box; border-radius: 26px; background: #fff8f6; overflow: hidden; }
	.art { position: absolute; top: 0; right: 0; width: 270px; }
	.art-vs { font: italic 900 140px 'Lato', sans-serif; fill: #fce6e4; stroke: #fff6f4; stroke-width: 36px; paint-order: stroke; }
	h2 { position: relative; display: flex; align-items: center; gap: 14px; margin: 0; font-size: 41px; line-height: 60px; font-weight: 700; }
	.vs { font: italic 900 28px 'Lato', sans-serif; fill: #fff; text-anchor: middle; }
	p { position: relative; margin: 0; padding-top: 14px; font-size: 36px; line-height: 50px; color: #666; }
	p b { color: #d94a1a; font-size: 38px; }
	.vote { position: relative; display: grid; grid-template-columns: 1fr 1fr; margin-top: 18px; border: 5px solid #fff; border-radius: 56px; overflow: hidden; background: #fff; }
	.vote button { position: relative; display: flex; align-items: center; height: 92px; padding: 0 16px; font-size: 36px; line-height: 48px; }
	.bull { background: #fddedb; color: #d94a1a; gap: 24px; }
	.bear { background: #d6f0dd; color: #3dae62; gap: 20px; justify-content: flex-end; }
	.bear::before { content: ''; position: absolute; left: -3px; top: 0; width: 6px; height: 100%; background: #fff; transform: skewX(-3deg); }
	.knob { display: flex; align-items: center; justify-content: center; width: 73px; height: 73px; border-radius: 50%; background: #fff; }

	footer { display: grid; grid-template-columns: 272fr 215fr 215fr 215fr 216fr; height: 174px; border-top: 1px solid #d6d8da; background: #f7f8fa; color: #666; font-size: 36px; }
	.index { display: flex; flex-direction: column; align-items: center; padding-top: 9px; }
	.points { font-size: 38px; line-height: 62px; color: #d92c2c; }
	.row { display: flex; justify-content: space-between; width: 222px; padding-left: 30px; line-height: 42px; }
	.action { display: flex; flex-direction: column; align-items: center; padding-top: 10px; line-height: 72px; }
	.add { color: #d65a18; }
</style>
